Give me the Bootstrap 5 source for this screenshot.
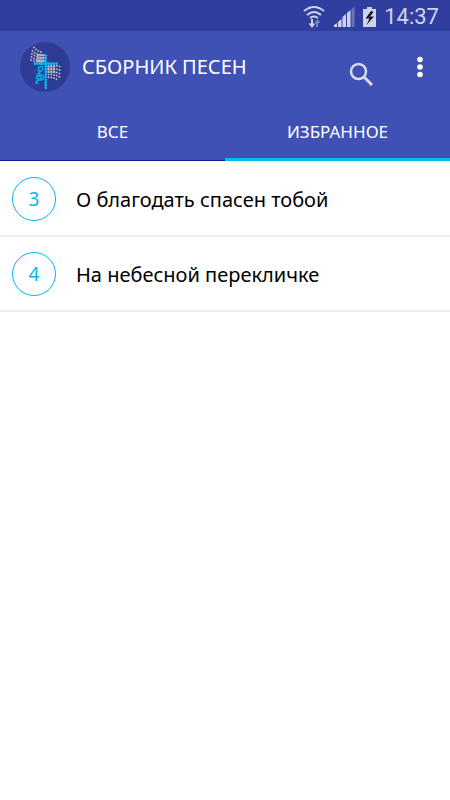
<!DOCTYPE html>
<html lang="ru">
<head>
<meta charset="utf-8">
<meta name="viewport" content="width=device-width, initial-scale=1">
<title>Сборник песен</title>
<link href="https://cdn.jsdelivr.net/npm/bootstrap@5.3.0/dist/css/bootstrap.min.css" rel="stylesheet">
<style>
body { font-family: "Noto Sans", sans-serif; color: #000; background: #fff; }
.status-bar { height: 31px; background: #303f9f; color: #d0d4ea; padding: 2px 11px 0 0; gap: 8px; }
.clock { font-family: Roboto, sans-serif; font-size: 22px; line-height: 29px; }
.app-head { background: #3f51b5; color: #fff; }
.title-bar { height: 72px; padding: 0 12px 0 20px; }
.app-name { font-size: 20px; line-height: 24px; margin-left: 12px; }
.tool { width: 36px; height: 40px; }
.tool-search { margin: 14px 23px 0 0; }
.song-tabs .nav-link { height: 58px; border: 0; border-bottom: 1px solid #0d1fa0; border-radius: 0; background: transparent; color: #fff; font-size: 17px; line-height: 24px; padding: 0; }
.song-tabs .nav-link.active { border-bottom: 3px solid #00bcf2; padding-top: 2px; }
.song-list { padding-top: 1px; }
.song { height: 75px; padding: 0 13px 0 12px; border-bottom: 2px solid #ececec; color: #000; gap: 20px; font-size: 20px; line-height: 28px; }
.song-name { padding-top: 2px; }
.song-no { width: 44px; height: 44px; border: 1px solid #03b7f5; color: #03b7f5; font-size: 19px; padding-top: 1px; }
</style>
<script src="https://cdn.jsdelivr.net/npm/bootstrap@5.3.0/dist/js/bootstrap.bundle.min.js"></script>
</head>
<body>
<div class="status-bar d-flex align-items-center justify-content-end">
  <svg width="22" height="24" viewBox="0 0 22 24" fill="none" stroke="#d0d4ea" stroke-width="2" aria-label="Wi-Fi">
    <path d="M1 6Q11-2 21 6M4 10Q11 4 18 10M7 13Q11 10 15 13"/>
    <path d="M9 14v8" stroke-width="2"/><path d="M5.500 18.500h7L9 23z" fill="#d0d4ea" stroke="none"/>
    <path d="M14 22v-6" stroke="#7882c0"/><path d="M11.500 18h6L14.500 14z" fill="#7882c0" stroke="none"/>
  </svg>
  <svg width="22" height="22" viewBox="0 0 22 22" fill="#d0d4ea" aria-label="Сигнал">
    <path d="M1 21v-2l3-2v4zM5 21v-5l3.500-3v8zM9.500 21V11l3.500-3v13zM14 21V7l3.500-3v17z"/>
    <path d="M18.500 21V3l3-2v20z" fill="#6873b9"/>
  </svg>
  <svg width="13" height="22" viewBox="0 0 13 22" aria-label="Батарея">
    <path d="M4 1h5v2h4v18H0V3h4z" fill="#d0d4ea"/>
    <path d="M8 5L2.500 12.500h4l-3 6.500 7.500-8.500H7L10.500 6z" fill="#10132b"/>
  </svg>
  <span class="clock">14:37</span>
</div>
<header class="app-head">
  <div class="title-bar d-flex align-items-center">
    <svg width="50" height="50" viewBox="0 0 50 50" fill="none" aria-hidden="true">
      <circle cx="25" cy="25" r="25" fill="#2f3c96"/>
      <g stroke="#bbb7bb" stroke-width="1.9" stroke-linecap="round" stroke-dasharray="0 2.8">
        <path d="M14 5.500Q18 10 23.500 10.500"/>
        <path d="M12.500 9Q17 13 23.500 13.200"/>
        <path d="M12 12Q17 15.500 23.500 15.900"/>
        <path d="M11.500 15Q17 18.600 23.500 18.600"/>
        <path d="M11 18Q17 20 22.500 20"/>
        <path d="M28.500 24.500Q35 22.500 41 25"/>
        <path d="M28.500 27.200Q35 26 41 28.500"/>
        <path d="M28.500 29.900Q34 29 40.500 32"/>
        <path d="M28.500 32.600Q34 32 40 35"/>
        <path d="M28.500 35.300Q34 35 38.500 38.500"/>
      </g>
      <g stroke="#bbb7bb" stroke-width="2.5" stroke-linecap="round" stroke-dasharray="0 2.8">
        <path d="M18 13.200H23.700M18 16.200H23.700M18 19H23.700"/>
        <path d="M28.500 24.500H34.300M28.500 27.200H34.300M28.500 30H34.300"/>
      </g>
      <g stroke="#05bdf2" stroke-width="2.7" stroke-linecap="round" stroke-dasharray="0 2.7">
        <path d="M25.700 13.500V46.200"/><path d="M15 21.700H38.800"/>
      </g>
      <path d="M18 41c-2 1-3-1-1-2s4-1 3.500-4L18.500 28c-1-4 5-5 4-1-1 3-6 4-6 8 0 3 6 4 7 1 1-3-5-5-5-1" stroke="#05a8e5" stroke-width="1.700"/>
    </svg>
    <h1 class="app-name fw-normal mb-0">СБОРНИК ПЕСЕН</h1>
    <button type="button" class="tool tool-search btn p-0 border-0 ms-auto d-flex align-items-center justify-content-center" aria-label="Поиск">
      <svg width="24" height="24" viewBox="0 0 24 24" fill="none" stroke="#d9dcf0"><circle cx="9.500" cy="9.500" r="7.500" stroke-width="2.500"/><path d="M15 15l8 8" stroke-width="3"/></svg>
    </button>
    <button type="button" class="tool btn p-0 border-0 d-flex align-items-center justify-content-center" aria-label="Меню">
      <svg width="6" height="22" viewBox="0 0 6 22" fill="#fff"><circle cx="3" cy="3.500" r="2.800"/><circle cx="3" cy="11" r="2.800"/><circle cx="3" cy="18.500" r="2.800"/></svg>
    </button>
  </div>
  <div class="song-tabs nav nav-fill nav-justified" role="tablist">
    <button type="button" class="nav-link" role="tab" aria-selected="false">ВСЕ</button>
    <button type="button" class="nav-link active" role="tab" aria-selected="true">ИЗБРАННОЕ</button>
  </div>
</header>
<main class="song-list">
  <a href="#song-3" id="song-3" class="song d-flex align-items-center text-decoration-none"><span class="song-no rounded-circle d-flex align-items-center justify-content-center flex-shrink-0">3</span><span class="song-name">О благодать спасен тобой</span></a>
  <a href="#song-4" id="song-4" class="song d-flex align-items-center text-decoration-none"><span class="song-no rounded-circle d-flex align-items-center justify-content-center flex-shrink-0">4</span><span class="song-name">На небесной перекличке</span></a>
</main>
</body>
</html>
